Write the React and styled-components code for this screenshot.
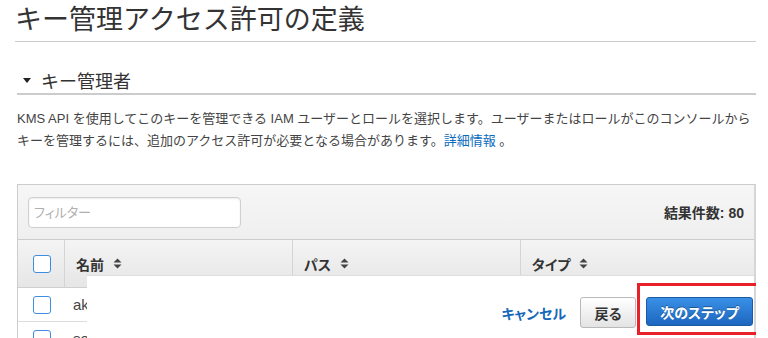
import React from "react";
import styled, { createGlobalStyle } from "styled-components";

const GlobalStyle = createGlobalStyle`
    body {
        margin: 0;
        background: #ffffff;
        color: #333333;
        font-family: "Liberation Sans", "Noto Sans CJK JP", sans-serif;
        overflow: hidden;
    }
`;

const Page = styled.div`
    position: relative;
    width: 741px;
    height: 338px;
    padding-left: 15px;
    overflow: hidden;
`;

const Title = styled.h1`
    margin: 0;
    height: 41px;
    line-height: 41px;
    font-size: 27px;
    font-weight: 400;
    color: #333333;
    border-bottom: 1px solid #cccccc;
`;

const Section = styled.div`
    margin: 25px 0 0 2px;
`;

const SectionHeader = styled.h2`
    margin: 0;
    display: flex;
    align-items: center;
    gap: 10px;
    height: 26px;
    padding-left: 6px;
    font-size: 18px;
    font-weight: 400;
    color: #333333;
    border-bottom: 2px solid #cccccc;
`;

const Caret = styled.span`
    width: 0;
    height: 0;
    border-left: 4px solid transparent;
    border-right: 4px solid transparent;
    border-top: 5px solid #222222;
`;

const Desc = styled.p`
    margin: 13px 0 0;
    font-size: 13px;
    line-height: 22px;
    color: #444444;
    white-space: nowrap;
`;

const Link = styled.a`
    color: #0a6bbd;
    text-decoration: none;
`;

const Panel = styled.div`
    margin-top: 32px;
    border: 1px solid #cccccc;
    border-right-width: 2px;
    border-right-color: #d6d6d6;
`;

const Toolbar = styled.div`
    height: 54px;
    padding: 0 10px;
    display: flex;
    align-items: center;
    justify-content: space-between;
    background: linear-gradient(#f6f6f6, #efefef);
`;

const Filter = styled.input`
    box-sizing: border-box;
    width: 213px;
    height: 31px;
    padding: 0 5px;
    border: 1px solid #cfcfcf;
    border-radius: 4px;
    background: #ffffff;
    box-shadow: inset 0 1px 2px rgba(0, 0, 0, 0.08);
    font-family: inherit;
    font-size: 13px;
    font-feature-settings: "palt";
    outline: none;

    &::placeholder {
        color: #b0b0b0;
    }
`;

const Count = styled.span`
    font-size: 14px;
    font-weight: 700;
    color: #333333;
`;

const Table = styled.div`
    display: grid;
    grid-template-columns: 46px 228px 228px 1fr;
`;

const HeadCell = styled.div`
    height: 47px;
    display: flex;
    align-items: center;
    justify-content: ${(p) => (p.$center ? "center" : "flex-start")};
    gap: 9px;
    padding-left: ${(p) => (p.$center ? "0" : "11px")};
    border-top: 1px solid #cccccc;
    border-bottom: 1px solid #cfcfcf;
    border-left: ${(p) => (p.$first ? "none" : "1px solid #d4d4d4")};
    background: linear-gradient(#f4f4f4, #e6e6e6);
    font-size: 14px;
    font-weight: 700;
    color: #333333;
    font-feature-settings: "palt";
`;

const Cell = styled.div`
    height: 33px;
    display: flex;
    align-items: center;
    justify-content: ${(p) => (p.$center ? "center" : "flex-start")};
    padding-left: ${(p) => (p.$center ? "0" : "9px")};
    border-bottom: 1px solid #dddddd;
    font-size: 15px;
    color: #444444;
`;

const Checkbox = styled.span`
    box-sizing: border-box;
    display: block;
    width: 18px;
    height: 18px;
    margin-left: 1px;
    border: 1.5px solid #3d8ee0;
    border-radius: 3px;
    background: #ffffff;
`;

const Footer = styled.div`
    position: absolute;
    left: 87px;
    right: 2px;
    top: 275px;
    bottom: 0;
    display: flex;
    justify-content: flex-end;
    align-items: flex-start;
    padding: 21px 1px 0 0;
    background: #ffffff;
    border-top: 1px solid #dedede;
    font-feature-settings: "palt";
`;

const CancelLink = styled.a`
    margin: 6px 14px 0 0;
    font-size: 14px;
    font-weight: 700;
    color: #1668bb;
    text-decoration: none;
`;

const Button = styled.button`
    box-sizing: border-box;
    height: ${(p) => (p.$primary ? "29px" : "31px")};
    padding: 0;
    width: ${(p) => (p.$primary ? "107px" : "56px")};
    margin-left: ${(p) => (p.$primary ? "10px" : "0")};
    border-radius: 3px;
    border: 1px solid ${(p) => (p.$primary ? "#1b5ba6" : "#b9b9b9")};
    background: ${(p) =>
        p.$primary
            ? "linear-gradient(#3990e6, #1d66c0)"
            : "linear-gradient(#ffffff, #e3e3e3)"};
    color: ${(p) => (p.$primary ? "#ffffff" : "#333333")};
    text-shadow: ${(p) => (p.$primary ? "0 -1px 0 rgba(0,0,0,0.35)" : "none")};
    font-family: inherit;
    font-feature-settings: "palt";
    font-size: 14px;
    font-weight: 700;
`;

const Highlight = styled.div`
    position: absolute;
    left: 637px;
    top: 283px;
    width: 130px;
    height: 52px;
    box-sizing: border-box;
    border: 3px solid #e8202a;
    pointer-events: none;
`;

const SortIcon = () => (
    <svg width="9" height="11" viewBox="0 0 9 11">
        <path d="M0.5 4.5 L4.5 0.5 L8.5 4.5 Z" fill="#444" />
        <path d="M0.5 6.5 L8.5 6.5 L4.5 10.5 Z" fill="#444" />
    </svg>
);

const columns = ["名前", "パス", "タイプ"];
const rows = ["ak", "se", "ad"];

const App = () => {
    return (
        <Page>
            <GlobalStyle />
            <Title>キー管理アクセス許可の定義</Title>
            <Section>
                <SectionHeader>
                    <Caret />
                    キー管理者
                </SectionHeader>
                <Desc>
                    KMS API を使用してこのキーを管理できる IAM
                    ユーザーとロールを選択します。ユーザーまたはロールがこのコンソールから
                    <br />
                    キーを管理するには、追加のアクセス許可が必要となる場合があります。
                    <Link href="#">詳細情報</Link> 。
                </Desc>
                <Panel>
                    <Toolbar>
                        <Filter placeholder="フィルター" />
                        <Count>結果件数: 80</Count>
                    </Toolbar>
                    <Table>
                        <HeadCell $center $first>
                            <Checkbox />
                        </HeadCell>
                        {columns.map((c) => (
                            <HeadCell key={c}>
                                {c}
                                <SortIcon />
                            </HeadCell>
                        ))}
                        {rows.map((r) => (
                            <React.Fragment key={r}>
                                <Cell $center>
                                    <Checkbox />
                                </Cell>
                                <Cell>{r}</Cell>
                                <Cell />
                                <Cell />
                            </React.Fragment>
                        ))}
                    </Table>
                </Panel>
            </Section>
            <Footer>
                <CancelLink href="#">キャンセル</CancelLink>
                <Button>戻る</Button>
                <Button $primary>次のステップ</Button>
            </Footer>
            <Highlight />
        </Page>
    );
};

export default App;
